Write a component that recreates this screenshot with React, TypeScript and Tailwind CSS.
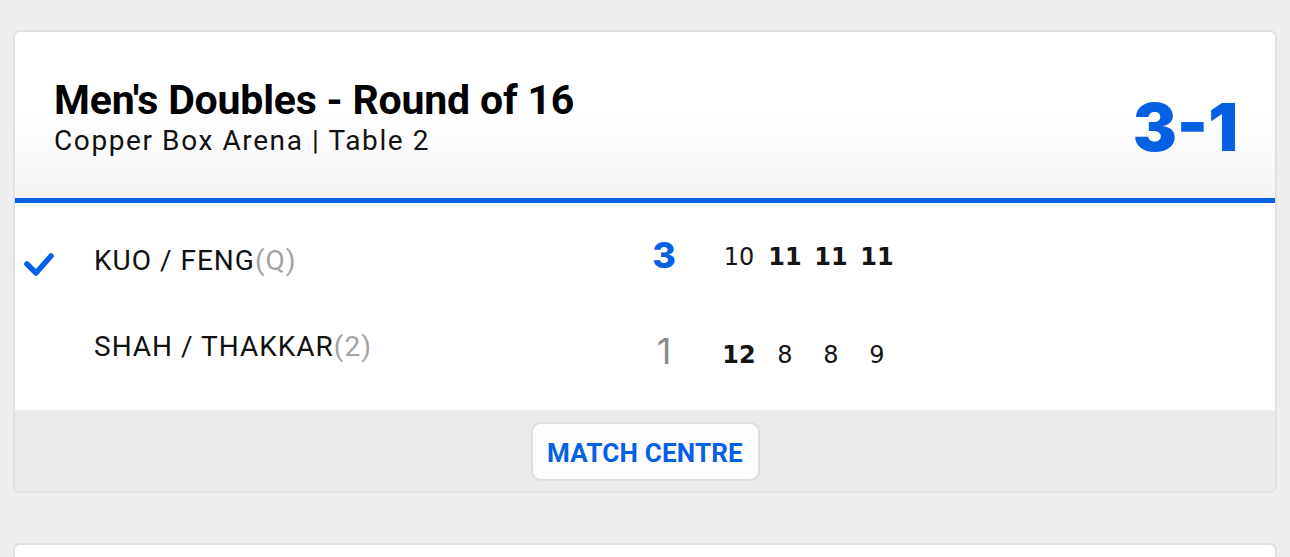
import React from "react";

const sets = [
  { a: "10", b: "12", aw: false },
  { a: "11", b: "8", aw: true },
  { a: "11", b: "8", aw: true },
  { a: "11", b: "9", aw: true },
];

export default function App() {
  return (
    <div className="w-[1290px] h-[557px] overflow-hidden bg-[#efeeee] pt-[30px] px-[13px] font-['Roboto',sans-serif]">
      <div className="rounded-[7px] border-2 border-[#e1e0e0] overflow-hidden bg-white">
        <div className="h-[166px] flex items-center justify-between pl-[39px] pr-[37px] bg-gradient-to-b from-white via-white to-[#f5f4f4]">
          <div className="pt-[4px]">
            <div className="text-[41px] leading-[46px] font-bold text-black tracking-[-0.2px]">Men's Doubles - Round of 16</div>
            <div className="text-[28px] leading-[34px] text-[#111] tracking-[1.6px] mt-[1px]">Copper Box Arena | Table 2</div>
          </div>
          <div className="text-[66px] leading-none font-black text-[#0560e3] tracking-[0px] mt-[24px] font-['Inter',sans-serif]">3-1</div>
        </div>
        <div className="h-[5px] bg-[#0560e3]" />
        <div className="pt-[15px] pb-[20px] bg-white">
          {[0, 1].map((r) => (
            <div key={r} className="h-[86px] flex items-center">
              <div className="w-[79px] pl-[8px] flex items-center">
                {r === 0 && (
                  <svg width="32" height="30" viewBox="0 0 32 30" className="mt-[2px]">
                    <polyline points="4,17 13,26 28,9" fill="none" stroke="#0560e3" strokeWidth="5.5" strokeLinecap="round" strokeLinejoin="round" />
                  </svg>
                )}
              </div>
              <div className="w-[549px] text-[28px] leading-none text-[#111] tracking-[1px]">
                {r === 0 ? "KUO / FENG" : "SHAH / THAKKAR"}
                <span className="text-[#a3a3a3]">{r === 0 ? "(Q)" : "(2)"}</span>
              </div>
              <div className={`w-[42px] text-center text-[36px] leading-none font-['Inter',sans-serif] ${r === 0 ? "font-extrabold text-[#0560e3] pb-[13px]" : "font-normal text-[#8a8a8a] pt-[8px]"}`}>
                {r === 0 ? "3" : "1"}
              </div>
              <div className={`flex ml-[31px] ${r === 0 ? "pb-[8px]" : "pt-[15px]"}`}>
                {sets.map((s, i) => {
                  const bold = r === 0 ? s.aw : !s.aw;
                  return (
                    <div key={i} className={`w-[46px] text-center text-[24px] leading-none text-[#151515] font-['DejaVu_Sans',sans-serif] ${bold ? "font-bold" : "font-normal"}`}>
                      {r === 0 ? s.a : s.b}
                    </div>
                  );
                })}
              </div>
            </div>
          ))}
        </div>
        <div className="bg-[#ebeaea] pt-[12px] pb-[10px] flex justify-center">
          <button className="h-[59px] w-[229px] pt-[3px] rounded-[10px] border-2 border-[#dedede] bg-[#fdfdfd] text-[26px] font-bold text-[#0560e3] tracking-[0.2px] font-['Roboto',sans-serif]">
            MATCH CENTRE
          </button>
        </div>
      </div>
      <div className="mt-[50px] rounded-t-[7px] border-2 border-b-0 border-[#e1e0e0] bg-white h-[40px]" />
    </div>
  );
}
